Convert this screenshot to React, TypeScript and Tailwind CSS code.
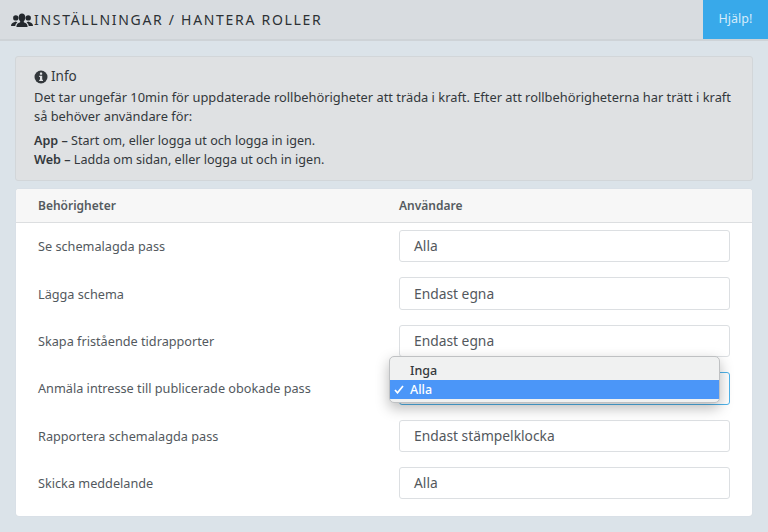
const rows = [
  { label: "Se schemalagda pass", value: "Alla" },
  { label: "Lägga schema", value: "Endast egna" },
  { label: "Skapa fristående tidrapporter", value: "Endast egna" },
  { label: "Anmäla intresse till publicerade obokade pass", value: "Alla", focused: true },
  { label: "Rapportera schemalagda pass", value: "Endast stämpelklocka" },
  { label: "Skicka meddelande", value: "Alla" },
];

function UsersIcon() {
  return (
    <svg width="22" height="14" viewBox="0 0 22 14" fill="#23282d" className="shrink-0">
      <circle cx="4.800" cy="4.900" r="2.700" />
      <path d="M0 13c0-2.400 1.500-3.200 3-3.800l1.800-.6 1.600.8C5 10.400 4.300 11.600 4.300 13z" />
      <circle cx="17.200" cy="4.900" r="2.700" />
      <path d="M22 13c0-2.400-1.500-3.200-3-3.800l-1.800-.6-1.600.8c1.400 1 2.100 2.200 2.100 3.600z" />
      <path d="M5.400 14c0-2.900 1.700-3.800 3.300-4.400.6-.3.700-.8.400-1.300-.8-.9-1.400-2.200-1.400-3.700C7.700 1.900 9 .5 11 .5s3.300 1.400 3.300 4.100c0 1.500-.6 2.800-1.400 3.700-.3.500-.2 1 .4 1.300 1.600.6 3.300 1.500 3.300 4.400z" />
    </svg>
  );
}

function InfoIcon() {
  return (
    <svg width="14" height="14" viewBox="0 0 14 14" className="shrink-0">
      <circle cx="7" cy="7" r="6.500" fill="#33383c" />
      <rect x="5.900" y="2.600" width="2.300" height="2.100" rx="0.400" fill="#dfe1e3" />
      <path d="M5.200 5.700h3v4.100h.8v1.300H5.200V9.800h.8V7H5.200z" fill="#dfe1e3" />
    </svg>
  );
}

export default function App() {
  return (
    <div className="relative w-[768px] h-[532px] overflow-hidden bg-[#dbe3e9] font-['Noto_Sans','Open_Sans',sans-serif] text-[#3f4549]">
      <div className="flex h-[41px] items-stretch justify-between bg-[#d8dce0] border-b-2 border-[#ced3d7]">
        <div className="flex items-center pl-[11px] gap-[1px]">
          <UsersIcon />
          <span className="text-[14px] tracking-[1.700px] text-[#2c3135]">INSTÄLLNINGAR / HANTERA ROLLER</span>
        </div>
        <div className="flex w-[65px] h-[39px] items-center justify-center bg-[#38a9ea] text-[12.500px] text-[#d6ecfa]">Hjälp!</div>
      </div>

      <div className="mx-[15px] mt-[15px] h-[125px] rounded-[3px] border border-[#d2d6d9] bg-[#dfe1e3] px-[18px] pt-[10px] text-[12.850px] leading-[19px] text-[#33383c]">
        <div className="flex items-center gap-[3px] text-[13.500px] leading-[19px]">
          <InfoIcon />
          <span>Info</span>
        </div>
        <p className="mt-[2px]">
          Det tar ungefär 10min för uppdaterade rollbehörigheter att träda i kraft. Efter att rollbehörigheterna har trätt i kraft så behöver användare för:
        </p>
        <p className="mt-[5px] text-[12.600px]">
          <b className="font-semibold">App –</b> Start om, eller logga ut och logga in igen.
        </p>
        <p className="text-[12.600px]">
          <b className="font-semibold">Web –</b> Ladda om sidan, eller logga ut och in igen.
        </p>
      </div>

      <div className="mx-[16px] mt-[8px] h-[327px] rounded-[3px] bg-white overflow-hidden shadow-[0_0_1px_#c9ced2]">
        <div className="flex h-[34px] items-center bg-[#f7f7f7] border-b border-[#dcdee0] text-[12px] font-semibold text-[#555b60]">
          <div className="w-[383px] pl-[22px]">Behörigheter</div>
          <div>Användare</div>
        </div>
        <div className="flex flex-col gap-[15px] pt-[7px]">
          {rows.map((r) => (
            <div key={r.label} className="flex h-[32.400px] items-center text-[12.700px] text-[#53595e]">
              <div className="w-[383px] pl-[22px] pt-[1px]">{r.label}</div>
              <div
                className={
                  r.focused
                    ? "flex h-full w-[331px] items-center rounded-[3px] border border-[#4fb3ea] bg-white pl-[14px] pt-[1px] text-[13.800px] text-[#53585d]"
                    : "flex h-full w-[331px] items-center rounded-[3px] border border-[#dcdfe2] bg-white pl-[14px] pt-[1px] text-[13.800px] text-[#53585d]"
                }
              >
                {r.value}
              </div>
            </div>
          ))}
        </div>
      </div>

      <div className="absolute left-[389px] top-[356px] w-[331px] h-[47px] overflow-hidden rounded-[5px] border border-[#bfc1c3] bg-[#f0f1f1] pt-[4px] text-[12.500px] font-medium leading-[19px] text-[#35393c] shadow-[0_5px_14px_rgba(0,0,0,0.28)]">
        <div className="pl-[20px]">Inga</div>
        <div className="relative bg-[#4b96f8] pl-[20px] text-white">
          <svg width="10" height="9" viewBox="0 0 10 9" className="absolute left-[4px] top-[5px]">
            <path d="M1 5l2.500 2.800L9 1" fill="none" stroke="white" strokeWidth="1.700" />
          </svg>
          Alla
        </div>
      </div>
    </div>
  );
}
